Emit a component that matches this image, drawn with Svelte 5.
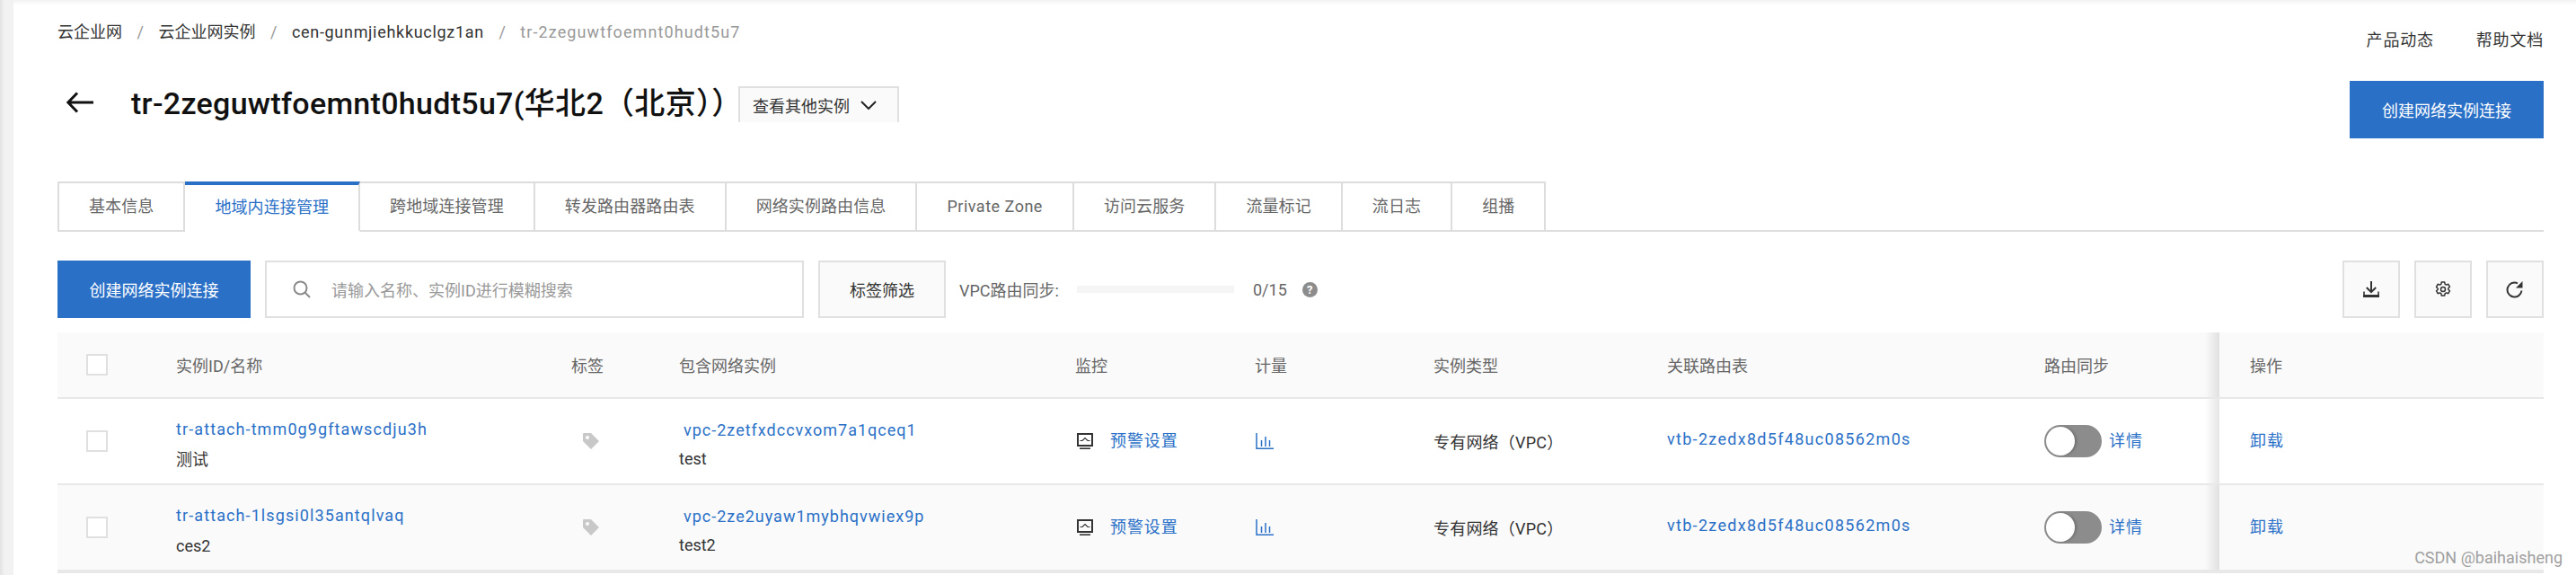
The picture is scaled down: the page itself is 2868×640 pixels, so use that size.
<script>
  const tabs = ['基本信息', '地域内连接管理', '跨地域连接管理', '转发路由器路由表', '网络实例路由信息', 'Private Zone', '访问云服务', '流量标记', '流日志', '组播'];
  const activeTab = 1;

  const rows = [
    { id: 'tr-attach-tmm0g9gftawscdju3h', name: '测试', vpc: 'vpc-2zetfxdccvxom7a1qceq1', vpcName: 'test' },
    { id: 'tr-attach-1lsgsi0l35antqlvaq', name: 'ces2', vpc: 'vpc-2ze2uyaw1mybhqvwiex9p', vpcName: 'test2' }
  ];
  const routeTable = 'vtb-2zedx8d5f48uc08562m0s';
</script>

<div class="page">
  <div class="top">
    <nav class="crumbs">
      <span>云企业网</span><i>/</i>
      <span>云企业网实例</span><i>/</i>
      <span class="latin">cen-gunmjiehkkuclgz1an</span><i>/</i>
      <span class="latin current">tr-2zeguwtfoemnt0hudt5u7</span>
    </nav>
    <div class="top-links">
      <span>产品动态</span>
      <span>帮助文档</span>
    </div>
  </div>

  <div class="head">
    <div class="title-wrap">
      <svg class="back" width="30" height="24" viewBox="0 0 30 24" fill="none" stroke="#111" stroke-width="3">
        <path d="M30 12H2M12 1.500 1.800 12 12 22.500" />
      </svg>
      <h1>tr-2zeguwtfoemnt0hudt5u7(华北2（北京））</h1>
      <button class="other">查看其他实例
        <svg width="18" height="10" viewBox="0 0 18 10" fill="none" stroke="#222" stroke-width="2"><path d="M1 1l8 8 8-8" /></svg>
      </button>
    </div>
    <button class="primary top-btn">创建网络实例连接</button>
  </div>

  <div class="tabs">
    {#each tabs as tab, i}
      <div class="tab" class:active={i === activeTab} class:wide={tab === 'Private Zone'}>{tab}</div>
    {/each}
  </div>

  <div class="toolbar">
    <button class="primary create">创建网络实例连接</button>
    <div class="search">
      <svg width="20" height="20" viewBox="0 0 20 20" fill="none" stroke="#8a8a8a" stroke-width="2">
        <circle cx="8.500" cy="8.500" r="7" /><path d="M13.500 13.500 19 19" />
      </svg>
      <span>请输入名称、实例ID进行模糊搜索</span>
    </div>
    <button class="plain tag-filter">标签筛选</button>
    <span class="sync-label">VPC路由同步:</span>
    <div class="progress"></div>
    <span class="count">0/15</span>
    <span class="help">?</span>
    <div class="actions">
      <button class="plain icon-btn" aria-label="下载">
        <svg width="18" height="18" viewBox="0 0 18 18" fill="none" stroke="#333" stroke-width="2">
          <path d="M9 0v12M3.800 7 9 12.200 14.200 7" />
          <path d="M1 11.500V16h16v-4.500" stroke-width="1.600" />
          <path d="M0 16.500h18" stroke-width="3" />
        </svg>
      </button>
      <button class="plain icon-btn" aria-label="设置">
        <svg width="18" height="18" viewBox="0 0 18 18" fill="none" stroke="#333" stroke-width="1.500" stroke-linejoin="round">
          <path d="M7.300 1h3.400l.5 2.300 1.400.8 2.200-.8 1.700 3-1.700 1.500v1.400l1.700 1.500-1.700 3-2.200-.8-1.400.8-.5 2.300H7.300l-.5-2.300-1.400-.8-2.200.8-1.700-3 1.700-1.500V8.300L1.500 6.300l1.700-3 2.200.8 1.400-.8z" />
          <circle cx="9" cy="9" r="2.500" />
        </svg>
      </button>
      <button class="plain icon-btn" aria-label="刷新">
        <svg width="20" height="20" viewBox="0 0 20 20" fill="none">
          <path d="M17.500 11.500A8 8 0 1 1 13 3.300" stroke="#333" stroke-width="2" />
          <path d="M18.500 1v7.500H11z" fill="#333" />
        </svg>
      </button>
    </div>
  </div>

  <div class="table">
    <div class="row header">
      <div class="cell check"><span class="box"></span></div>
      <div class="cell">实例ID/名称</div>
      <div class="cell">标签</div>
      <div class="cell">包含网络实例</div>
      <div class="cell">监控</div>
      <div class="cell">计量</div>
      <div class="cell">实例类型</div>
      <div class="cell">关联路由表</div>
      <div class="cell">路由同步</div>
      <div class="cell op">操作</div>
    </div>
    {#each rows as row, i}
      <div class="row body" class:alt={i % 2 === 1}>
        <div class="cell check"><span class="box"></span></div>
        <div class="cell stack">
          <a href="#top" class="id-link">{row.id}</a>
          <span class="dark">{row.name}</span>
        </div>
        <div class="cell">
          <svg class="tag" width="18" height="18" viewBox="0 0 18 18">
            <path fill="#c8c8c8" fill-rule="evenodd" d="M1 0h8l9 9-9 9-9-9V1a1 1 0 0 1 1-1zM5 3a2 2 0 1 0 0 4 2 2 0 0 0 0-4z" />
          </svg>
        </div>
        <div class="cell stack vpc">
          <a href="#top">{row.vpc}</a>
          <span class="dark">{row.vpcName}</span>
        </div>
        <div class="cell monitor">
          <svg width="18" height="18" viewBox="0 0 18 18" fill="none" stroke="#333">
            <rect x="1" y="1" width="16" height="13" stroke-width="2" />
            <path d="M3.500 8.500h2.500L9 5.500l3 3h2.500" stroke-width="1.200" />
            <path d="M3 17.200h12" stroke-width="1.600" />
          </svg>
          <a href="#top">预警设置</a>
        </div>
        <div class="cell">
          <svg class="bars" width="20" height="18" viewBox="0 0 20 18" fill="none" stroke="#2a70c7">
            <path d="M1 0v17.200h19" stroke-width="1.500" />
            <path d="M6.500 8v7M11 4v11M15.500 8v7" stroke-width="1.500" />
          </svg>
        </div>
        <div class="cell dark type">专有网络（VPC）</div>
        <div class="cell route"><a href="#top">{routeTable}</a></div>
        <div class="cell sync">
          <span class="switch"><span class="knob"></span></span>
          <a href="#top">详情</a>
        </div>
        <div class="cell op"><a href="#top">卸载</a></div>
      </div>
    {/each}
  </div>

  <div class="watermark">CSDN @baihaisheng</div>
</div>

<style>
  :global(body) {
    margin: 0;
    background: #fff;
  }

  .page {
    position: relative;
    width: 2868px;
    height: 640px;
    box-sizing: border-box;
    padding: 24px 36px 0 64px;
    overflow: hidden;
    font-family: Roboto, "Noto Sans CJK SC", sans-serif;
    font-size: 18px;
    color: #333;
    background: linear-gradient(to bottom, #f2f2f2, #fff 6px);
  }

  .page::before {
    content: '';
    position: absolute;
    left: 0;
    top: 0;
    bottom: 0;
    width: 15px;
    background: linear-gradient(to right, #e2e2e2, #f2f2f2 5px);
  }

  button {
    font: inherit;
    padding: 0;
    cursor: pointer;
  }

  a {
    color: #2a70c7;
    text-decoration: none;
    letter-spacing: 0.9px;
  }

  .top {
    display: flex;
    justify-content: space-between;
    height: 66px;
  }

  .crumbs {
    display: flex;
    height: 24px;
    line-height: 24px;
    color: #333;
  }

  .crumbs i {
    font-style: normal;
    color: #999;
    margin: 0 16.5px;
  }

  .crumbs .latin {
    letter-spacing: 0.7px;
  }

  .crumbs .current {
    color: #999;
    letter-spacing: 1.1px;
  }

  .top-links {
    display: flex;
    gap: 47px;
    padding-top: 9px;
    line-height: 24px;
    height: 24px;
    letter-spacing: 0.8px;
  }

  .head {
    display: flex;
    justify-content: space-between;
    align-items: flex-start;
    height: 112px;
  }

  .title-wrap {
    display: flex;
    align-items: flex-start;
    margin-top: 6px;
  }

  .back {
    margin: 6px 0 0 10px;
  }

  h1 {
    width: 676px;
    margin: 0 0 0 42px;
    font-size: 34px;
    font-weight: 500;
    line-height: 38px;
    letter-spacing: 0.3px;
    color: #111;
    white-space: nowrap;
  }

  .other {
    display: flex;
    align-items: center;
    gap: 12px;
    width: 179px;
    height: 40px;
    box-sizing: border-box;
    padding: 0 0 0 14px;
    background: #fafafa;
    border: 2px solid #e0e0e0;
    border-bottom: 0;
    color: #333;
  }

  .primary {
    background: #2a70c7;
    color: #fff;
    border: 0;
    height: 64px;
  }

  .top-btn {
    width: 216px;
  }

  .tabs {
    display: flex;
    height: 56px;
    box-sizing: border-box;
    border-bottom: 2px solid #ddd;
  }

  .tab {
    box-sizing: border-box;
    height: 56px;
    padding: 0 33px;
    line-height: 52px;
    letter-spacing: 0.1px;
    color: #666;
    background: #fff;
    border: 2px solid #ddd;
    border-left: 0;
    white-space: nowrap;
  }

  .tab:first-child {
    border-left: 2px solid #ddd;
  }

  .tab.wide {
    letter-spacing: 0.5px;
  }

  .tab.active {
    color: #2a70c7;
    border-top: 4px solid #2a70c7;
    border-bottom-color: #fff;
    line-height: 50px;
  }

  .toolbar {
    display: flex;
    align-items: center;
    height: 64px;
    margin-top: 32px;
  }

  .create {
    width: 215px;
  }

  .search {
    display: flex;
    align-items: center;
    gap: 23px;
    width: 600px;
    height: 64px;
    box-sizing: border-box;
    margin-left: 16px;
    padding-left: 29px;
    border: 2px solid #e0e0e0;
    color: #999;
  }

  .plain {
    background: #fafafa;
    border: 2px solid #e0e0e0;
    color: #333;
    height: 64px;
    box-sizing: border-box;
  }

  .tag-filter {
    width: 142px;
    margin-left: 16px;
  }

  .sync-label {
    margin-left: 15px;
    width: 131px;
    white-space: nowrap;
    color: #666;
  }

  .progress {
    width: 175px;
    height: 8px;
    background: #f5f5f5;
  }

  .count {
    margin-left: 21px;
    color: #666;
  }

  .help {
    width: 17px;
    height: 17px;
    margin-left: 17px;
    border-radius: 50%;
    background: #8c8c8c;
    color: #fff;
    font-size: 13px;
    font-weight: 700;
    line-height: 17px;
    text-align: center;
  }

  .actions {
    display: flex;
    gap: 16px;
    margin-left: auto;
  }

  .icon-btn {
    display: flex;
    align-items: center;
    justify-content: center;
    width: 64px;
  }

  .table {
    margin-top: 16px;
    border-bottom: 2px solid #e8e8e8;
  }

  .row {
    display: grid;
    grid-template-columns: 132px 440px 120px 441px 200px 199px 260px 420px 195px 361px;
  }

  .row.header {
    height: 74px;
    background: #fafafa;
    border-bottom: 2px solid #e8e8e8;
    box-sizing: border-box;
    color: #666;
  }

  .row.body {
    height: 96px;
    box-sizing: border-box;
    border-bottom: 2px solid #e8e8e8;
    background: #fff;
  }

  .row.body.alt {
    background: #fafafa;
  }

  .cell {
    display: flex;
    align-items: center;
    min-width: 0;
    white-space: nowrap;
  }

  .check {
    padding-left: 32px;
  }

  .box {
    display: block;
    width: 24px;
    height: 24px;
    box-sizing: border-box;
    background: #fff;
    border: 2px solid #e0e0e0;
  }

  .stack {
    flex-direction: column;
    align-items: flex-start;
    justify-content: center;
    gap: 10px;
    padding-top: 8px;
    line-height: 24px;
  }

  .id-link {
    letter-spacing: 1.1px;
  }

  .vpc {
    gap: 8px;
  }

  .vpc a {
    margin-left: 5px;
    letter-spacing: 1px;
  }

  .dark {
    color: #333;
  }

  .tag {
    margin-left: 13px;
  }

  .monitor {
    gap: 19px;
    padding-left: 2px;
  }

  .monitor a,
  .sync a,
  .op a,
  .route a {
    margin-bottom: 5px;
  }

  .route a {
    letter-spacing: 1.3px;
  }

  .bars {
    margin-left: 1px;
  }

  .type {
    letter-spacing: 0.2px;
  }

  .sync {
    gap: 8px;
  }

  .switch {
    position: relative;
    display: block;
    width: 64px;
    height: 36px;
    border-radius: 18px;
    background: #8c8c8c;
  }

  .knob {
    position: absolute;
    left: 2px;
    top: 2px;
    width: 32px;
    height: 32px;
    border-radius: 50%;
    background: #fff;
    box-shadow: 2px 0 3px rgba(0, 0, 0, 0.2);
  }

  .op {
    position: relative;
    padding-left: 34px;
    background: inherit;
  }

  .op::before {
    content: '';
    position: absolute;
    left: -16px;
    top: 0;
    bottom: 0;
    width: 16px;
    background: linear-gradient(to right, rgba(0, 0, 0, 0), rgba(0, 0, 0, 0.1));
  }

  .watermark {
    position: absolute;
    right: 15px;
    top: 609px;
    line-height: 24px;
    color: #a0a0a0;
    font-size: 18px;
  }
</style>
